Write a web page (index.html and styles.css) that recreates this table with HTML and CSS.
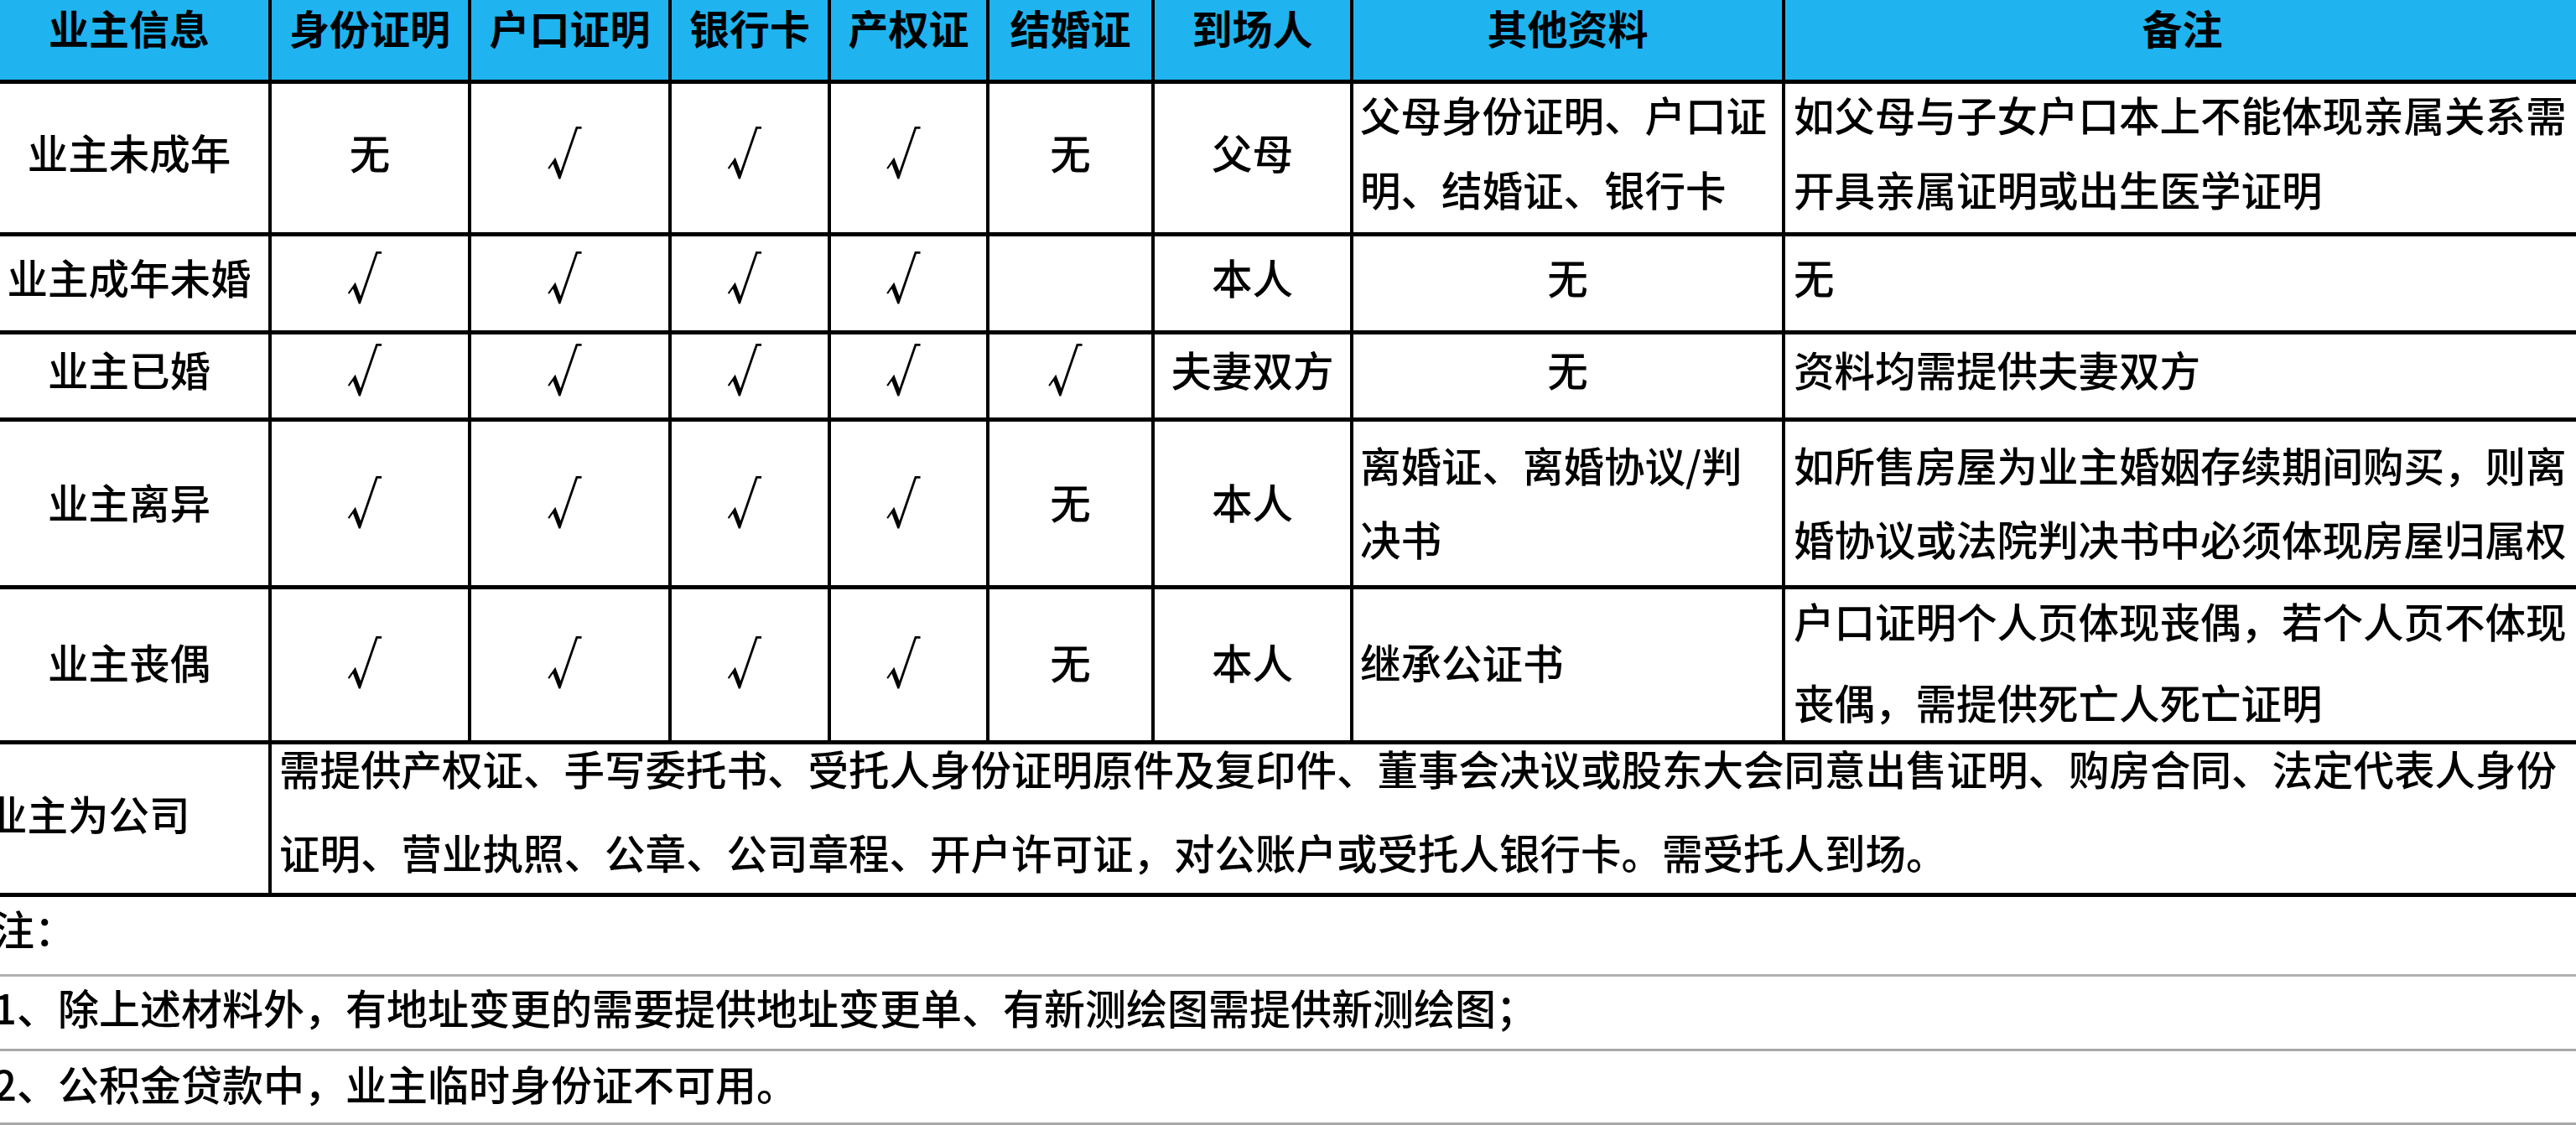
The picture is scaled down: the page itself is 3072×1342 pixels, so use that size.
FILE: index.html
```html
<!DOCTYPE html>
<html lang="zh-CN">
<head>
<meta charset="utf-8">
<title>业主资料清单</title>
<link rel="stylesheet" href="styles.css">
</head>
<body>
<div class="sheet">
  <table class="grid">
    <colgroup>
      <col class="c-owner"><col class="c-id"><col class="c-hukou"><col class="c-bank"><col class="c-deed"><col class="c-marry"><col class="c-present"><col class="c-other"><col class="c-remark">
    </colgroup>
    <thead>
      <tr class="r-head">
        <th>业主信息</th><th>身份证明</th><th>户口证明</th><th>银行卡</th><th>产权证</th><th>结婚证</th><th>到场人</th><th>其他资料</th><th>备注</th>
      </tr>
    </thead>
    <tbody>
      <tr class="r1">
        <td>业主未成年</td><td>无</td><td><span class="tick">√</span></td><td><span class="tick">√</span></td><td><span class="tick">√</span></td><td>无</td><td>父母</td>
        <td class="other"><div class="lines">父母身份证明、户口证<br>明、结婚证、银行卡</div></td>
        <td class="remark"><div class="lines">如父母与子女户口本上不能体现亲属关系需<br>开具亲属证明或出生医学证明</div></td>
      </tr>
      <tr class="r2">
        <td>业主成年未婚</td><td><span class="tick">√</span></td><td><span class="tick">√</span></td><td><span class="tick">√</span></td><td><span class="tick">√</span></td><td></td><td>本人</td>
        <td>无</td>
        <td class="remark">无</td>
      </tr>
      <tr class="r3">
        <td>业主已婚</td><td><span class="tick">√</span></td><td><span class="tick">√</span></td><td><span class="tick">√</span></td><td><span class="tick">√</span></td><td><span class="tick">√</span></td><td>夫妻双方</td>
        <td>无</td>
        <td class="remark">资料均需提供夫妻双方</td>
      </tr>
      <tr class="r4">
        <td>业主离异</td><td><span class="tick">√</span></td><td><span class="tick">√</span></td><td><span class="tick">√</span></td><td><span class="tick">√</span></td><td>无</td><td>本人</td>
        <td class="other"><div class="lines">离婚证、离婚协议/判<br>决书</div></td>
        <td class="remark"><div class="lines">如所售房屋为业主婚姻存续期间购买，则离<br>婚协议或法院判决书中必须体现房屋归属权</div></td>
      </tr>
      <tr class="r5">
        <td>业主丧偶</td><td><span class="tick">√</span></td><td><span class="tick">√</span></td><td><span class="tick">√</span></td><td><span class="tick">√</span></td><td>无</td><td>本人</td>
        <td class="other">继承公证书</td>
        <td class="remark"><div class="lines">户口证明个人页体现丧偶，若个人页不体现<br>丧偶，需提供死亡人死亡证明</div></td>
      </tr>
      <tr class="r6">
        <td class="owner-left">业主为公司</td>
        <td class="wide" colspan="8"><div class="lines">需提供产权证、手写委托书、受托人身份证明原件及复印件、董事会决议或股东大会同意出售证明、购房合同、法定代表人身份<br>证明、营业执照、公章、公司章程、开户许可证，对公账户或受托人银行卡。需受托人到场。</div></td>
      </tr>
    </tbody>
  </table>
  <div class="notes">
    <div class="note note-title">注：</div>
    <div class="note note-1">1、除上述材料外，有地址变更的需要提供地址变更单、有新测绘图需提供新测绘图；</div>
    <div class="note note-2">2、公积金贷款中，业主临时身份证不可用。</div>
  </div>
</div>
</body>
</html>
```

FILE: styles.css
```css
html, body {
  margin: 0;
  padding: 0;
  background: #ffffff;
}

body {
  overflow: hidden;
  font-family: "Noto Sans CJK SC", "Noto Sans", sans-serif;
  color: #000000;
}

.sheet {
  width: 3100px;
  margin-left: -20px;
}

.grid {
  width: 3100px;
  table-layout: fixed;
  border-collapse: separate;
  border-spacing: 0;
}

.c-owner { width: 344px; }
.c-id { width: 238px; }
.c-hukou { width: 239px; }
.c-bank { width: 190px; }
.c-deed { width: 189px; }
.c-marry { width: 197px; }
.c-present { width: 237px; }
.c-other { width: 515px; }
.c-remark { width: 951px; }

.grid th,
.grid td {
  border-right: 4px solid #000000;
  border-bottom: 5px solid #000000;
  padding: 0;
  text-align: center;
  vertical-align: middle;
  white-space: nowrap;
  font-size: 48.5px;
  line-height: 48px;
  font-weight: 500;
}

.grid th {
  background: #1fb4f0;
  font-size: 48px;
  font-weight: 700;
  padding-bottom: 31px;
}

.grid td:first-child,
.grid th:first-child {
  padding-left: 8px;
}

.r-head { height: 100px; }
.r1 { height: 182px; --lh: 89px; }
.r2 { height: 117px; }
.r3 { height: 104px; }
.r4 { height: 200px; --lh: 88px; }
.r5 { height: 185px; --lh: 97px; }
.r6 { height: 182px; --lh: 100px; }

.r1 td { padding-bottom: 16px; }
.r2 td { padding-bottom: 16px; }
.r3 td { padding-bottom: 18px; }
.r4 td { padding-bottom: 6px; }
.r5 td { padding-bottom: 8px; }
.r6 td { padding-bottom: 14px; }
.r6 td.wide { padding-bottom: 22px; }

.lines {
  line-height: var(--lh);
  margin: calc((48px - var(--lh)) / 2) 0;
}

.tick {
  display: inline-block;
  font-size: 64px;
  line-height: 48px;
  vertical-align: -3px;
  clip-path: inset(-20px 34% -20px -20px);
  margin-right: -0.12em;
}

.grid td.other {
  text-align: left;
  padding-left: 8px;
}

.grid td.remark {
  text-align: left;
  padding-left: 10px;
}

.grid td.owner-left {
  text-align: left;
  padding-left: 4px;
}

.grid td.wide {
  text-align: left;
  padding-left: 9px;
}

.notes {
  width: 3100px;
}

.note {
  font-size: 49px;
  font-weight: 500;
  padding-left: 12px;
  border-bottom: 3px solid #a8a8a8;
  white-space: nowrap;
}

.note-title {
  line-height: 74px;
  padding-bottom: 18px;
  border-bottom-color: #b0b0b0;
}

.note-1 {
  line-height: 72px;
  padding-bottom: 14px;
}

.note-2 {
  line-height: 76px;
  padding-bottom: 9px;
}
```
